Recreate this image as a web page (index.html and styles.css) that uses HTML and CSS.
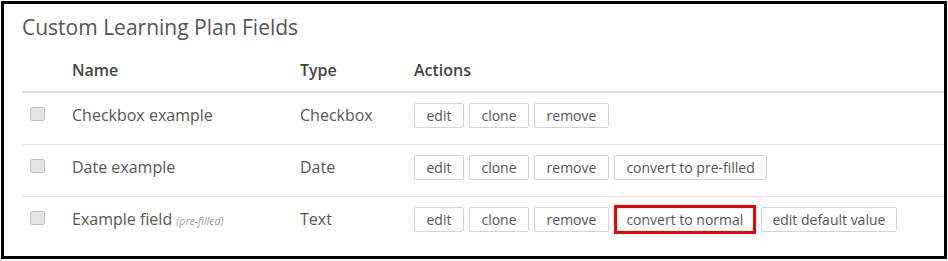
FILE: index.html
```html
<!DOCTYPE html>
<html lang="en">
<head>
    <meta charset="UTF-8">
    <title>Custom Learning Plan Fields</title>
    <link rel="stylesheet" href="styles.css">
</head>
<body>

<div class="frame">
    <h2 class="title">Custom Learning Plan Fields</h2>

    <table class="fields">
        <thead>
            <tr>
                <th class="col-check"></th>
                <th class="col-name">Name</th>
                <th class="col-type">Type</th>
                <th>Actions</th>
            </tr>
        </thead>
        <tbody>
            <tr>
                <td class="col-check"><span class="check"></span></td>
                <td>Checkbox example</td>
                <td>Checkbox</td>
                <td>
                    <div class="actions">
                        <button>edit</button>
                        <button>clone</button>
                        <button>remove</button>
                    </div>
                </td>
            </tr>
            <tr>
                <td class="col-check"><span class="check"></span></td>
                <td>Date example</td>
                <td>Date</td>
                <td>
                    <div class="actions">
                        <button>edit</button>
                        <button>clone</button>
                        <button>remove</button>
                        <button>convert to pre-filled</button>
                    </div>
                </td>
            </tr>
            <tr>
                <td class="col-check"><span class="check"></span></td>
                <td>Example field <em class="note">(pre-filled)</em></td>
                <td>Text</td>
                <td>
                    <div class="actions">
                        <button>edit</button>
                        <button>clone</button>
                        <button>remove</button>
                        <button class="marked">convert to normal</button>
                        <button class="wide">edit default value</button>
                    </div>
                </td>
            </tr>
        </tbody>
    </table>
</div>

</body>
</html>
```

FILE: styles.css
```css
body {
    margin: 0;
    background-color: #fff;
    font-family: 'Open Sans', 'Liberation Sans', sans-serif;
    color: #555;
}

.frame {
    box-sizing: border-box;
    width: 946px;
    height: 258px;
    margin: 1px 0 0 1px;
    border: 3px solid #000;
    padding: 9px 0 0 18px;
    overflow: hidden;
}

.title {
    margin: 0;
    font-size: 21px;
    font-weight: normal;
    line-height: 28px;
    color: #555;
}

.fields {
    width: 100%;
    border-collapse: collapse;
}

.fields th {
    padding: 18px 0 10px 0;
    text-align: left;
    font-size: 16px;
    font-weight: 600;
    line-height: 22px;
    color: #444;
    border-bottom: 2px solid #ddd;
    vertical-align: top;
}

.fields td {
    padding: 10px 0 16px 0;
    font-size: 16px;
    line-height: 25px;
    border-bottom: 1px solid #e6e6e6;
    vertical-align: top;
}

.fields tbody tr:last-child td {
    border-bottom: none;
}

.col-check {
    width: 50px;
}

.col-name {
    width: 228px;
}

.col-type {
    width: 114px;
}

.check {
    display: block;
    width: 13px;
    height: 12px;
    margin: 4px 0 0 8px;
    border: 1px solid #c4c4c4;
    border-radius: 2px;
    background-color: #e4e4e4;
}

.note {
    font-size: 10.5px;
    color: #999;
}

.actions {
    display: flex;
    align-items: flex-start;
    gap: 5px;
}

.actions button {
    height: 25px;
    padding: 0 11.5px;
    border: 1px solid #d4d4d4;
    border-radius: 2px;
    background-color: #fff;
    font-family: 'Open Sans', 'Liberation Sans', sans-serif;
    font-size: 14px;
    color: #555;
}

.actions button.marked {
    height: 29px;
    margin-top: -2px;
    padding: 0 9.5px;
    border: 3px solid #f00000;
    border-radius: 0;
}

.actions button.wide {
    padding: 0 10.5px;
}
```
